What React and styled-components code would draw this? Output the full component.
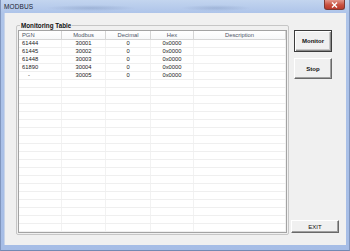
import React from "react"
import styled, { createGlobalStyle } from "styled-components"

const rows = [
  { pgn: "61444", modbus: "30001", dec: "0", hex: "0x0000" },
  { pgn: "61445", modbus: "30002", dec: "0", hex: "0x0000" },
  { pgn: "61448", modbus: "30003", dec: "0", hex: "0x0000" },
  { pgn: "61890", modbus: "30004", dec: "0", hex: "0x0000" },
  { pgn: "-", modbus: "30005", dec: "0", hex: "0x0000", indent: true },
]

const EMPTY_ROWS = 24 - rows.length

const App = () => (
  <Window>
    <GlobalStyle />
    <TitleBar>
      <Title>MODBUS</Title>
      <CloseButton>
        <svg width="7" height="6" viewBox="0 0 7 6">
          <path d="M1 0.5 L6 5.5 M6 0.5 L1 5.5" stroke="#fff" strokeWidth="1.4" />
        </svg>
      </CloseButton>
    </TitleBar>
    <Client>
      <GroupBox>
        <Legend>Monitoring Table</Legend>
        <ListView>
          <HeaderRow>
            <HeadCell $align="left">PGN</HeadCell>
            <HeadCell>Modbus</HeadCell>
            <HeadCell>Decimal</HeadCell>
            <HeadCell>Hex</HeadCell>
            <HeadCell>Description</HeadCell>
          </HeaderRow>
          {rows.map((r, i) => (
            <Row key={i}>
              <Cell $align="left" $indent={r.indent}>{r.pgn}</Cell>
              <Cell>{r.modbus}</Cell>
              <Cell>{r.dec}</Cell>
              <Cell>{r.hex}</Cell>
              <Cell />
            </Row>
          ))}
          {Array.from({ length: EMPTY_ROWS }).map((_, i) => (
            <Row key={"e" + i}>
              <Cell />
              <Cell />
              <Cell />
              <Cell />
              <Cell />
            </Row>
          ))}
        </ListView>
      </GroupBox>
      <Side>
        <DefaultButton>Monitor</DefaultButton>
        <Button>Stop</Button>
        <ExitButton>EXIT</ExitButton>
      </Side>
    </Client>
  </Window>
)

export default App

const GlobalStyle = createGlobalStyle`
  body {
    margin: 0;
    background: #fff;
  }
`

const Window = styled.div`
  width: 350px;
  height: 251px;
  box-sizing: border-box;
  display: flex;
  flex-direction: column;
  background: linear-gradient(to bottom, #c3d5ef 0px, #aec4e9 13px, #a6bde6 100%);
  border-left: 1px solid #8196be;
  border-right: 1px solid #8196be;
  border-bottom: 1px solid #7489b3;
  font-family: "Liberation Sans", Arial, sans-serif;
`

const TitleBar = styled.div`
  height: 13px;
  flex: none;
  display: flex;
  align-items: center;
  padding-left: 3px;
  background:
    radial-gradient(ellipse 45px 3px at 90px 8px, rgba(70, 95, 140, 0.22), transparent),
    radial-gradient(ellipse 35px 3px at 215px 8px, rgba(70, 95, 140, 0.2), transparent);
`

const Title = styled.span`
  font-size: 6.5px;
  color: #1b2433;
  letter-spacing: 0.1px;
`

const CloseButton = styled.div`
  margin-left: auto;
  margin-right: 4px;
  align-self: flex-start;
  width: 21px;
  height: 10px;
  box-sizing: border-box;
  display: flex;
  align-items: center;
  justify-content: center;
  background: linear-gradient(to bottom, #e3968a, #c8503f 55%, #b93a2c);
  border: 1px solid #7d3a34;
  border-top: none;
  border-radius: 0 0 3px 3px;
`

const Client = styled.div`
  flex: 1;
  margin: 0 3px 5px 3px;
  background: #f0f0f0;
  display: flex;
  align-items: stretch;
  padding: 9px 0 0 11px;
  border-left: 1px solid #c8d4e8;
`

const GroupBox = styled.fieldset`
  margin: 0;
  width: 273px;
  box-sizing: border-box;
  flex: none;
  align-self: flex-start;
  padding: 1px;
  border: 1px solid #c6c6c6;
  border-radius: 2px;
`

const Legend = styled.legend`
  font-size: 6.3px;
  font-weight: bold;
  color: #111;
  padding: 0 1px;
  margin-left: 2px;
  line-height: 7px;
`

const ListView = styled.div`
  border: 1px solid #a3a3a3;
  background: #fff;
  display: flex;
  flex-direction: column;
`

const columns = "43px 44px 45px 43px 1fr"

const HeaderRow = styled.div`
  display: grid;
  grid-template-columns: ${columns};
  height: 9px;
  box-sizing: border-box;
  border-bottom: 1px solid #d6d6d6;
  background: linear-gradient(to bottom, #ffffff, #f7f8f9);
`

const HeadCell = styled.div`
  font-size: 5.8px;
  color: #4d5566;
  line-height: 8px;
  text-align: ${(p) => p.$align || "center"};
  padding-left: ${(p) => (p.$align === "left" ? "3px" : "0")};
  border-right: 1px solid #d5d5d5;
  white-space: nowrap;
  overflow: hidden;
`

const Row = styled.div`
  display: grid;
  grid-template-columns: ${columns};
  height: 8px;
  box-sizing: border-box;
  border-bottom: 1px solid #efefef;
`

const Cell = styled.div`
  font-size: 5.8px;
  color: #222;
  line-height: 7px;
  text-align: ${(p) => p.$align || "center"};
  padding-left: ${(p) => (p.$align === "left" ? (p.$indent ? "9px" : "3px") : "0")};
  border-right: 1px solid #f2f2f2;
  white-space: nowrap;
  overflow: hidden;
`

const Side = styled.div`
  display: flex;
  flex-direction: column;
  align-items: flex-start;
  margin-left: 2px;
  width: 48px;
  padding-bottom: 3px;
  height: 214px;
  box-sizing: border-box;
`

const Button = styled.div`
  box-sizing: border-box;
  width: 38px;
  height: 21px;
  margin-left: 3px;
  margin-top: 6px;
  display: flex;
  align-items: center;
  justify-content: center;
  font-size: 6px;
  font-weight: bold;
  color: #111;
  background: #f0f0f0;
  border-top: 1px solid #ffffff;
  border-left: 1px solid #ffffff;
  border-right: 1px solid #696969;
  border-bottom: 1px solid #696969;
  box-shadow: inset -1px -1px 0 #a0a0a0;
`

const DefaultButton = styled(Button)`
  height: 22px;
  margin-top: 8px;
  border: 1px solid #3c3c3c;
  box-shadow: inset 1px 1px 0 #ffffff, inset -1px -1px 0 #8a8a8a, inset -2px -2px 0 #c8c8c8;
`

const ExitButton = styled(Button)`
  width: 48px;
  height: 13px;
  margin: auto 0 0 0;
  font-weight: normal;
  font-size: 6px;
`
